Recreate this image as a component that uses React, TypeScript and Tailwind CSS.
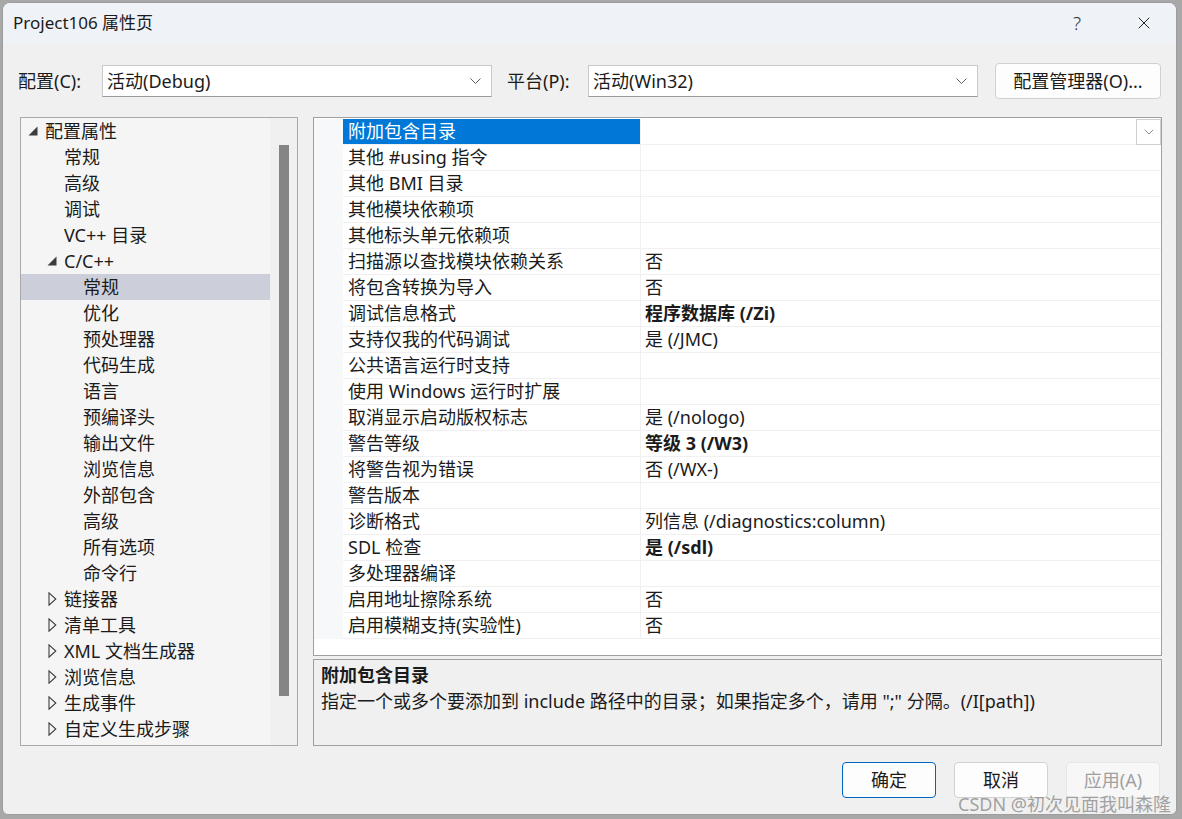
import { X, ChevronDown } from 'lucide-react';

type TreeItem = {
  label: string;
  level: 0 | 1 | 2;
  state?: 'open' | 'closed';
  selected?: boolean;
};

const TREE: TreeItem[] = [
  { label: '配置属性', level: 0, state: 'open' },
  { label: '常规', level: 1 },
  { label: '高级', level: 1 },
  { label: '调试', level: 1 },
  { label: 'VC++ 目录', level: 1 },
  { label: 'C/C++', level: 1, state: 'open' },
  { label: '常规', level: 2, selected: true },
  { label: '优化', level: 2 },
  { label: '预处理器', level: 2 },
  { label: '代码生成', level: 2 },
  { label: '语言', level: 2 },
  { label: '预编译头', level: 2 },
  { label: '输出文件', level: 2 },
  { label: '浏览信息', level: 2 },
  { label: '外部包含', level: 2 },
  { label: '高级', level: 2 },
  { label: '所有选项', level: 2 },
  { label: '命令行', level: 2 },
  { label: '链接器', level: 1, state: 'closed' },
  { label: '清单工具', level: 1, state: 'closed' },
  { label: 'XML 文档生成器', level: 1, state: 'closed' },
  { label: '浏览信息', level: 1, state: 'closed' },
  { label: '生成事件', level: 1, state: 'closed' },
  { label: '自定义生成步骤', level: 1, state: 'closed' },
];

type Prop = { name: string; value?: string; bold?: boolean };

const PROPS: Prop[] = [
  { name: '附加包含目录' },
  { name: '其他 #using 指令' },
  { name: '其他 BMI 目录' },
  { name: '其他模块依赖项' },
  { name: '其他标头单元依赖项' },
  { name: '扫描源以查找模块依赖关系', value: '否' },
  { name: '将包含转换为导入', value: '否' },
  { name: '调试信息格式', value: '程序数据库 (/Zi)', bold: true },
  { name: '支持仅我的代码调试', value: '是 (/JMC)' },
  { name: '公共语言运行时支持' },
  { name: '使用 Windows 运行时扩展' },
  { name: '取消显示启动版权标志', value: '是 (/nologo)' },
  { name: '警告等级', value: '等级 3 (/W3)', bold: true },
  { name: '将警告视为错误', value: '否 (/WX-)' },
  { name: '警告版本' },
  { name: '诊断格式', value: '列信息 (/diagnostics:column)' },
  { name: 'SDL 检查', value: '是 (/sdl)', bold: true },
  { name: '多处理器编译' },
  { name: '启用地址擦除系统', value: '否' },
  { name: '启用模糊支持(实验性)', value: '否' },
];

const LEVEL_PAD = ['pl-[7px]', 'pl-[26px]', 'pl-[45px]'];

function Chevron() {
  return (
    <svg width="11" height="6" viewBox="0 0 11 6" fill="none" stroke="#606060" strokeWidth="1">
      <path d="M0.5 0.5 L5.5 5.5 L10.5 0.5" />
    </svg>
  );
}

function Expander({ state }: { state?: 'open' | 'closed' }) {
  if (state === 'open') {
    return (
      <svg width="10" height="10" viewBox="0 0 10 10">
        <path d="M9.5 0.5 L9.5 9.5 L0.5 9.5 Z" fill="#3c3c3c" />
      </svg>
    );
  }
  if (state === 'closed') {
    return (
      <svg width="9" height="14" viewBox="0 0 9 14" className="ml-[1px]">
        <path d="M1 0.8 L7.8 7 L1 13.2 Z" fill="none" stroke="#3c3c3c" strokeWidth="1.1" />
      </svg>
    );
  }
  return null;
}

function ComboBox({ value }: { value: string }) {
  return (
    <div className="flex h-[32px] w-[390px] items-center justify-between border border-[#c8c8c8] border-b-[#9a9a9a] bg-white pl-[4px] pr-[10px]">
      <span>{value}</span>
      <Chevron />
    </div>
  );
}

export default function App() {
  return (
    <div className="h-[819px] w-[1182px] overflow-hidden bg-[#a8a8a8] pl-[2px] pt-[2px] font-['Noto_Sans','Noto_Sans_CJK_SC',sans-serif] text-[18px] leading-[26px] text-[#1b1b1b]">
      <div className="relative flex h-[813px] w-[1175px] flex-col overflow-hidden rounded-t-[8px] rounded-b-[6px] border border-[#9c9c9c] bg-[#f0f0f0]">
        {/* title bar */}
        <div className="flex h-[40px] shrink-0 items-center justify-between bg-[#eff2f7] pl-[10px]">
          <span className="text-[17px]">Project106 属性页</span>
          <div className="flex items-center">
            <span className="w-[70px] text-center text-[19px] font-light text-[#333]">?</span>
            <div className="flex w-[64px] items-center justify-center">
              <X className="h-[20px] w-[20px] text-[#222]" strokeWidth={1.2} />
            </div>
          </div>
        </div>

        {/* configuration row */}
        <div className="mt-[20px] flex h-[36px] shrink-0 items-center pl-[15px]">
          <span className="w-[84px]">配置(C):</span>
          <ComboBox value="活动(Debug)" />
          <span className="w-[96px] pl-[15px]">平台(P):</span>
          <ComboBox value="活动(Win32)" />
          <button className="ml-[17px] h-[36px] w-[166px] rounded-[4px] border border-[#d0d0d0] bg-[#fdfdfd] text-[18px]">
            配置管理器(O)...
          </button>
        </div>

        {/* main */}
        <div className="mt-[18px] flex h-[629px] shrink-0 gap-[15px] pl-[17px] pr-[14px]">
          {/* tree */}
          <div className="flex h-full w-[278px] border border-[#a9a9a9] bg-[#f5f5f5]">
            <div className="w-[249px]">
              {TREE.map((item, i) => (
                <div
                  key={i}
                  className={`flex h-[26px] items-center ${LEVEL_PAD[item.level]} ${item.selected ? 'bg-[#cccfda]' : ''}`}
                >
                  <div className="flex w-[17px] items-center">
                    <Expander state={item.state} />
                  </div>
                  <span>{item.label}</span>
                </div>
              ))}
            </div>
            <div className="flex flex-1 justify-center bg-[#f0f0f0] pt-[27px]">
              <div className="h-[551px] w-[10px] bg-[#858585]" />
            </div>
          </div>

          {/* right side */}
          <div className="flex flex-1 flex-col gap-[3px]">
            <div className="h-[539px] border border-[#a0a0a0] bg-white pt-[1px]">
              {PROPS.map((p, i) => (
                <div key={i} className="relative flex h-[26px] leading-[24px]">
                  <div className="w-[29px] bg-[#f7f8fa]" />
                  <div
                    className={`w-[298px] border-r border-b border-[#f0f0f0] pl-[5px] ${i === 0 ? 'bg-[#0078d7] text-white' : ''}`}
                  >
                    {p.name}
                  </div>
                  <div className={`flex-1 border-b border-[#f0f0f0] pl-[4px] ${p.bold ? 'font-bold' : ''}`}>
                    {p.value}
                  </div>
                  {i === 0 && (
                    <div className="absolute top-0 right-0 flex h-[26px] w-[25px] items-center justify-center border border-[#cfcfcf] bg-white">
                      <ChevronDown className="h-[16px] w-[16px] text-[#555]" strokeWidth={1} />
                    </div>
                  )}
                </div>
              ))}
            </div>
            <div className="flex-1 border border-[#a0a0a0] bg-[#f0f0f0] pl-[7px] pt-[2px]">
              <div className="font-bold">附加包含目录</div>
              <div>指定一个或多个要添加到 include 路径中的目录；如果指定多个，请用 ";" 分隔。(/I[path])</div>
            </div>
          </div>
        </div>

        {/* buttons */}
        <div className="mt-[16px] flex shrink-0 justify-end gap-[18px] pr-[16px]">
          <button className="h-[36px] w-[94px] rounded-[4px] border border-[#0067c0] bg-[#fdfdfd] text-[18px] leading-[22px]">确定</button>
          <button className="h-[36px] w-[94px] rounded-[4px] border border-[#d2d2d2] bg-[#fdfdfd] text-[18px] leading-[22px]">取消</button>
          <button className="h-[36px] w-[94px] rounded-[4px] border border-[#e6e6e6] bg-[#f7f7f7] text-[18px] leading-[22px] text-[#a0a0a0]">应用(A)</button>
        </div>

        {/* watermark */}
        <div className="pointer-events-none absolute right-[5px] bottom-0 text-[18px] leading-[19px] text-[#8c8c8c]/80">
          CSDN @初次见面我叫森隆
        </div>
      </div>
    </div>
  );
}
